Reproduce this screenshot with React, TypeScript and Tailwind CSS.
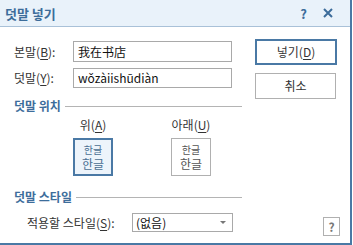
const font = { fontFamily: '"Noto Sans CJK KR", "Noto Sans", sans-serif' };

const U = ({ c }: { c: string }) => <span className="underline underline-offset-2">{c}</span>;

const Heading = ({ text }: { text: string }) => (
  <div className="flex items-center h-[16px]">
    <span className="text-[12px] font-bold text-[#3d6d9b] leading-none">{text}</span>
    <div className="flex-1 h-px bg-[#b4b4b4] ml-[4px]" />
  </div>
);

export default function App() {
  return (
    <div
      className="relative w-[352px] h-[245px] bg-white border-r-2 border-b-2 border-[#4a79a5] text-[#333] overflow-hidden"
      style={font}
    >
      {/* title bar */}
      <div className="h-[27px] bg-[#e9f2fa] border-b border-[#a9c1d8] flex items-center px-[5px]">
        <span className="text-[13px] font-bold text-[#3c6c9a] leading-none">덧말 넣기</span>
        <span className="ml-auto text-[13px] font-bold text-[#3c6c9a] leading-none mr-[16px]">?</span>
        <svg width="10" height="10" viewBox="0 0 10 10" className="mr-[12px]">
          <path d="M1 1 L9 9 M9 1 L1 9" stroke="#3c6c9a" strokeWidth="2" />
        </svg>
      </div>

      <div className="flex pl-[14px]">
        {/* left column */}
        <div className="w-[228px] text-[12px] leading-none">
          <div className="mt-[14px] flex items-center h-[21px]">
            <span className="w-[59px]">본말(<U c="B" />):</span>
            <div className="w-[159px] h-[21px] border border-[#a9a9a9] flex items-center px-[4px] text-[#111]">
              我在书店
            </div>
          </div>
          <div className="mt-[6px] flex items-center h-[20px]">
            <span className="w-[59px]">덧말(<U c="Y" />):</span>
            <div className="w-[159px] h-[20px] border border-[#a9a9a9] flex items-center px-[4px] text-[#111]">
              wǒzàiishūdiàn
            </div>
          </div>

          <div className="mt-[10px]">
            <Heading text="덧말 위치" />
          </div>

          <div className="flex mt-[5px]">
            <div className="ml-[59px] w-[40px] flex flex-col items-center">
              <span className="h-[14px] whitespace-nowrap">위(<U c="A" />)</span>
              <div className="mt-[5px] w-[40px] h-[38px] border-2 border-[#4a79a5] bg-[#edf4fb] flex flex-col items-center justify-center gap-[3px] text-[#4a6f92]">
                <span className="text-[10px] leading-none">한글</span>
                <span className="text-[12px] leading-none">한글</span>
              </div>
            </div>
            <div className="ml-[58px] w-[40px] flex flex-col items-center">
              <span className="h-[14px] whitespace-nowrap">아래(<U c="U" />)</span>
              <div className="mt-[5px] w-[40px] h-[38px] border border-[#b0b0b0] bg-white flex flex-col items-center justify-center gap-[3px] text-[#555]">
                <span className="text-[10px] leading-none">한글</span>
                <span className="text-[12px] leading-none">한글</span>
              </div>
            </div>
          </div>

          <div className="mt-[13px]">
            <Heading text="덧말 스타일" />
          </div>

          <div className="mt-[8px] flex items-center h-[19px]">
            <span className="ml-[13px] w-[105px] whitespace-nowrap">적용할 스타일(<U c="S" />):</span>
            <div className="w-[101px] h-[19px] border border-[#a9a9a9] flex items-center pl-[3px] pr-[6px] text-[#111]">
              <span>(없음)</span>
              <svg width="6" height="4" viewBox="0 0 6 4" className="ml-auto">
                <path d="M0 0 L6 0 L3 3 Z" fill="#777" />
              </svg>
            </div>
          </div>
        </div>

        {/* right column */}
        <div className="ml-[13px] flex flex-col text-[12px] leading-none">
          <button className="mt-[12px] w-[82px] h-[26px] border-2 border-[#4a79a5] bg-white flex items-center justify-center">
            넣기(<U c="D" />)
          </button>
          <button className="mt-[8px] w-[81px] h-[26px] border border-[#b0b0b0] bg-white flex items-center justify-center">
            취소
          </button>
          <div className="mt-[118px] ml-[68px] w-[17px] h-[19px] border border-[#b0b0b0] flex items-center justify-center text-[12px] font-bold text-[#777]">
            ?
          </div>
        </div>
      </div>
    </div>
  );
}
